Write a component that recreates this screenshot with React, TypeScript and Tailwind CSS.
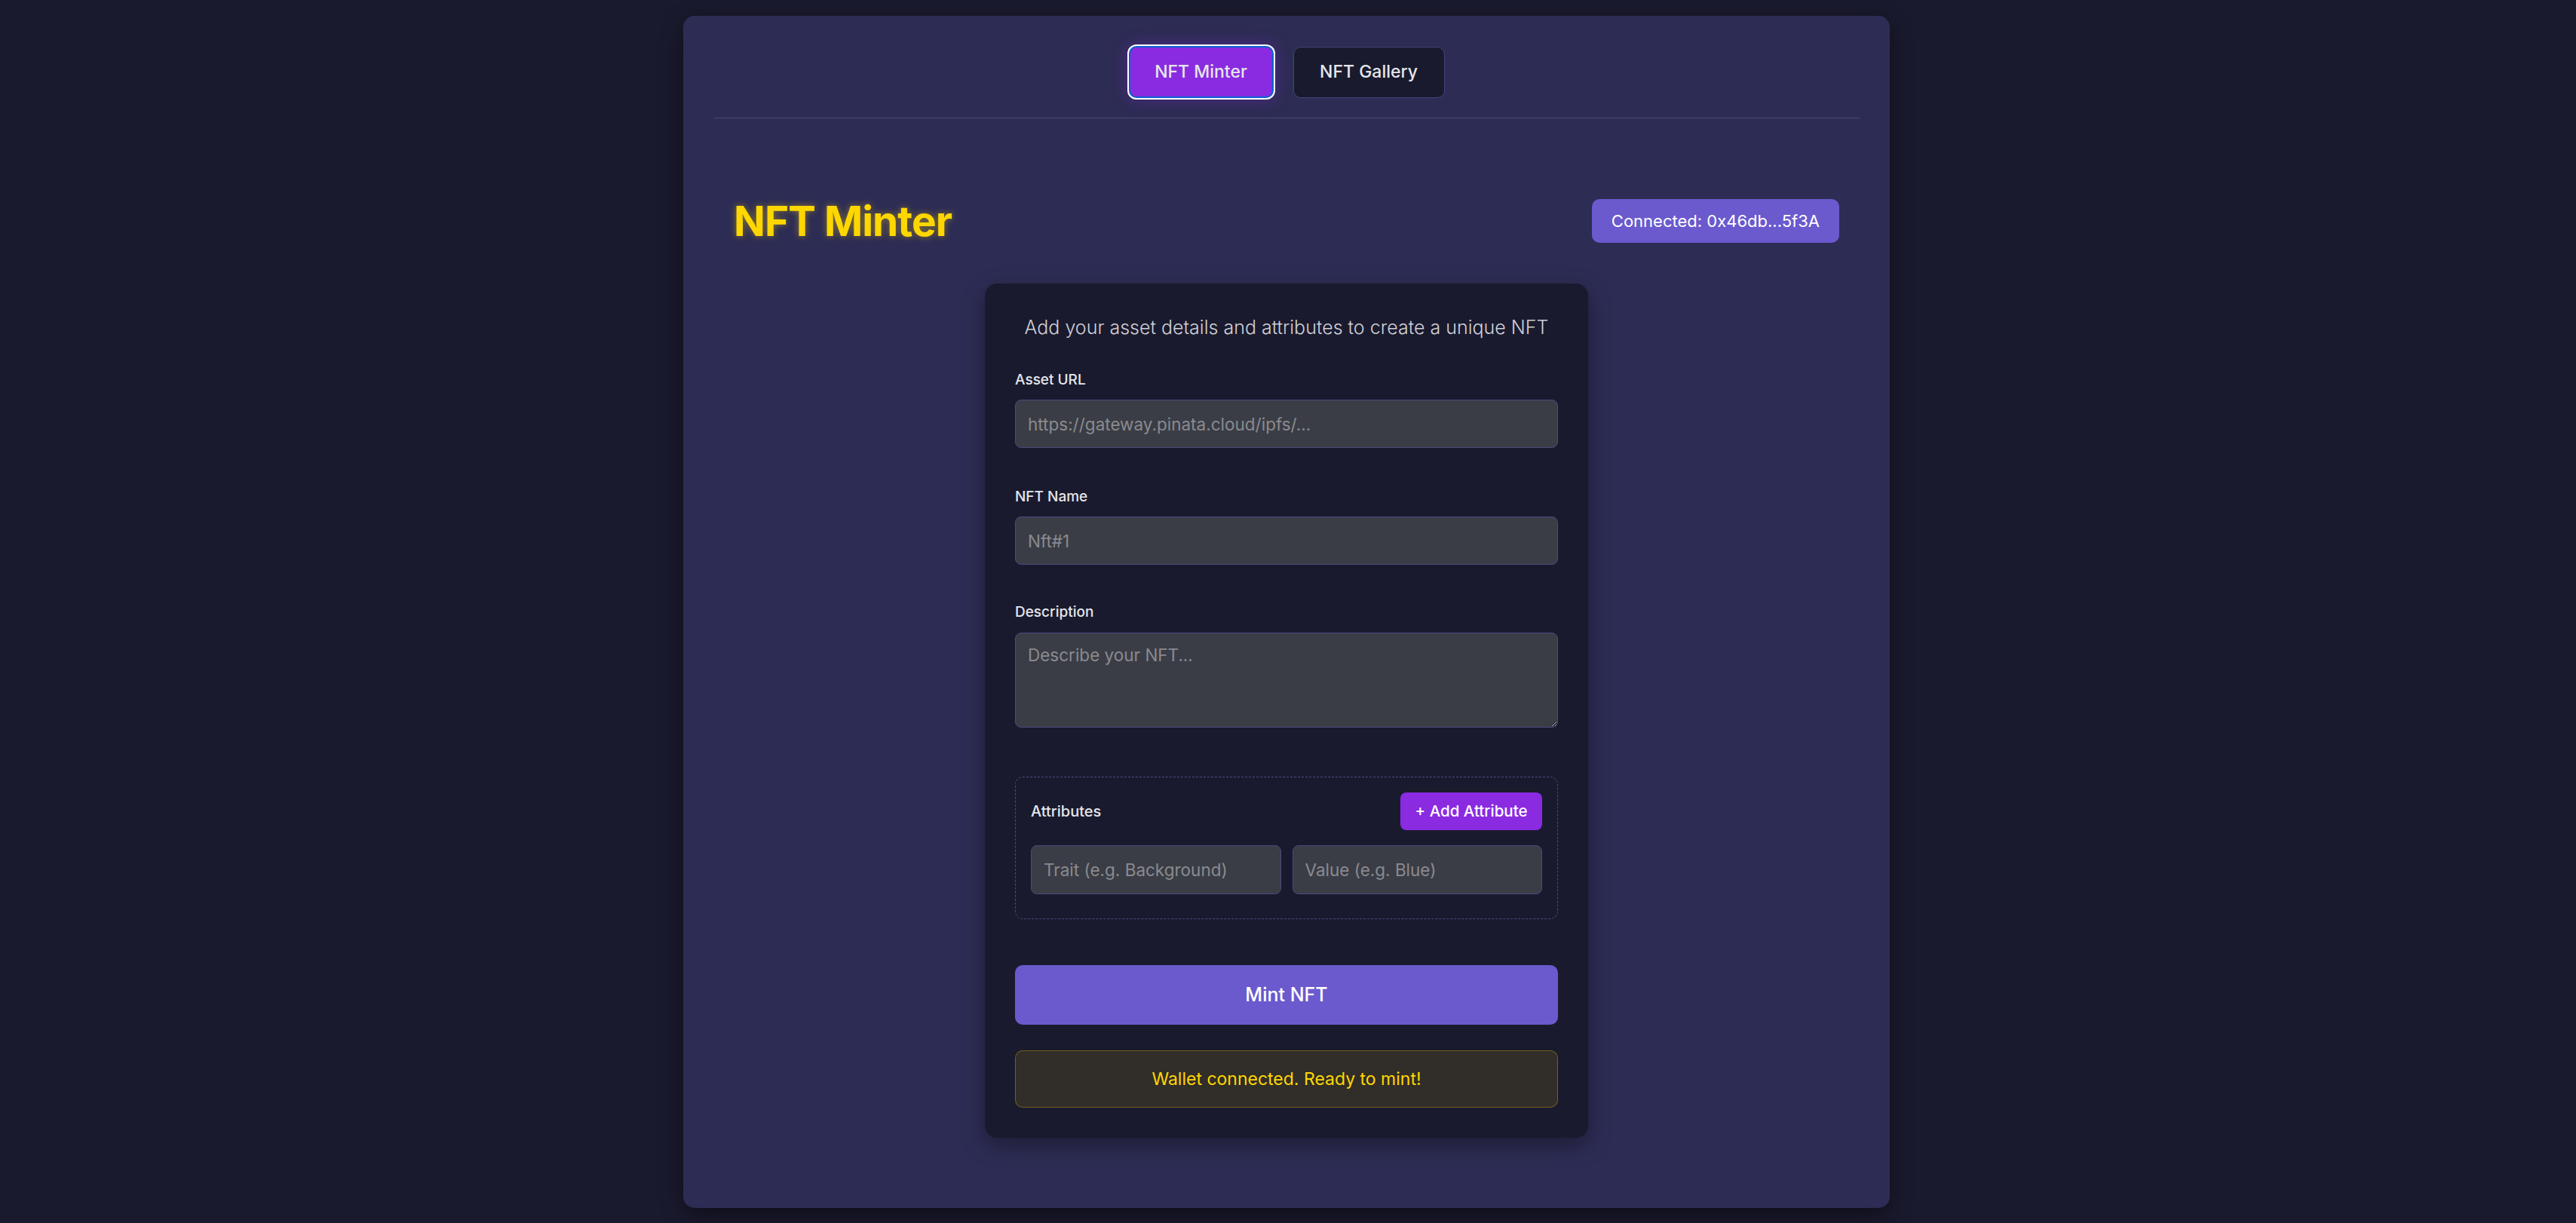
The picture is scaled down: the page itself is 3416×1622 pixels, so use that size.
import React from "react";

export default function App() {
  return (
    <div className="min-h-screen bg-[#1a1a2e] pt-[21px] pb-5 font-['Inter',sans-serif]">
      <div className="mx-auto w-[1600px] -translate-x-[2px] rounded-[15px] bg-[#2d2c54] px-10 pt-10 pb-[93px] shadow-[0_10px_30px_rgba(0,0,0,0.45)]">
        <nav className="flex items-center justify-center gap-[26px] border-b border-[#4a4878] pb-[26px]">
          <button className="flex h-[69px] w-[192px] items-center justify-center rounded-[10px] border-2 border-[#0a62d0] bg-[#8a2be2] text-[23px] font-medium text-[#e6e6ea] shadow-[0_0_0_2px_#ffffff,0_0_22px_rgba(138,43,226,0.45)]">
            NFT Minter
          </button>
          <button className="flex h-[68px] w-[201px] items-center justify-center rounded-[10px] border border-[#45437a] bg-[#1a1a2e] text-[23px] font-medium text-[#e6e6ea]">
            NFT Gallery
          </button>
        </nav>

        <header className="mt-[102px] flex h-[68px] items-center justify-between px-[27px]">
          <h1 className="text-[55px] font-bold leading-[68px] tracking-[-1px] text-[#ffd700] [text-shadow:0_0_10px_rgba(255,215,0,0.45)]">
            NFT Minter
          </h1>
          <div className="flex h-[58px] items-center rounded-[10px] bg-[#6a5acd] px-[26px] text-[22px] text-white">
            Connected: 0x46db...5f3A
          </div>
        </header>

        <div className="mx-auto mt-[49px] w-[800px] rounded-[16px] bg-[#1a1a2e] p-10 shadow-[0_10px_30px_rgba(0,0,0,0.35)]">
          <p className="mb-[38px] text-center text-[25px] font-light leading-[36px] text-[#cfcfd6]">
            Add your asset details and attributes to create a unique NFT
          </p>

          <div className="mb-[51px]">
            <label className="mb-3 block text-[19px] font-medium leading-[28px] text-[#e6e6ea]">Asset URL</label>
            <input
              className="block h-[64px] w-full rounded-[8px] border border-[#4b4a80] bg-[#3a3d45] px-4 text-[22.5px] text-white outline-none placeholder:text-[#8a8a8f]"
              placeholder="https://gateway.pinata.cloud/ipfs/..."
            />
          </div>

          <div className="mb-[49px]">
            <label className="mb-3 block text-[19px] font-medium leading-[28px] text-[#e6e6ea]">NFT Name</label>
            <input
              className="block h-[64px] w-full rounded-[8px] border border-[#4b4a80] bg-[#3a3d45] px-4 text-[22.5px] text-white outline-none placeholder:text-[#8a8a8f]"
              placeholder="Nft#1"
            />
          </div>

          <div className="mb-[65px]">
            <label className="mb-[13px] block text-[19px] font-medium leading-[28px] text-[#e6e6ea]">Description</label>
            <textarea
              className="block h-[126px] w-full rounded-[8px] border border-[#4b4a80] bg-[#3a3d45] px-4 py-3 text-[22.5px] text-white outline-none placeholder:text-[#8a8a8f]"
              placeholder="Describe your NFT..."
            />
          </div>

          <div className="rounded-[10px] border border-dashed border-[#4b4a80] p-5">
            <div className="mb-5 flex items-center justify-between">
              <span className="text-[20px] font-medium text-[#e6e6ea]">Attributes</span>
              <button className="flex h-[50px] w-[188px] items-center justify-center rounded-[8px] bg-[#8a2be2] text-[20.5px] font-medium text-white">
                + Add Attribute
              </button>
            </div>
            <div className="mb-3 grid grid-cols-2 gap-[15px]">
              <input
                className="block h-[65px] w-full rounded-[8px] border border-[#4b4a80] bg-[#3a3d45] px-4 text-[22.5px] text-white outline-none placeholder:text-[#8a8a8f]"
                placeholder="Trait (e.g. Background)"
              />
              <input
                className="block h-[65px] w-full rounded-[8px] border border-[#4b4a80] bg-[#3a3d45] px-4 text-[22.5px] text-white outline-none placeholder:text-[#8a8a8f]"
                placeholder="Value (e.g. Blue)"
              />
            </div>
          </div>

          <button className="mt-[61px] flex h-[79px] w-full items-center justify-center rounded-[10px] bg-[#6a5acd] text-[25px] font-medium text-white">
            Mint NFT
          </button>

          <div className="mt-[34px] flex h-[76px] items-center justify-center rounded-[10px] border border-[rgba(255,215,0,0.3)] bg-[rgba(255,215,0,0.1)] text-[23px] text-[#ffd700]">
            Wallet connected. Ready to mint!
          </div>
        </div>
      </div>
    </div>
  );
}
